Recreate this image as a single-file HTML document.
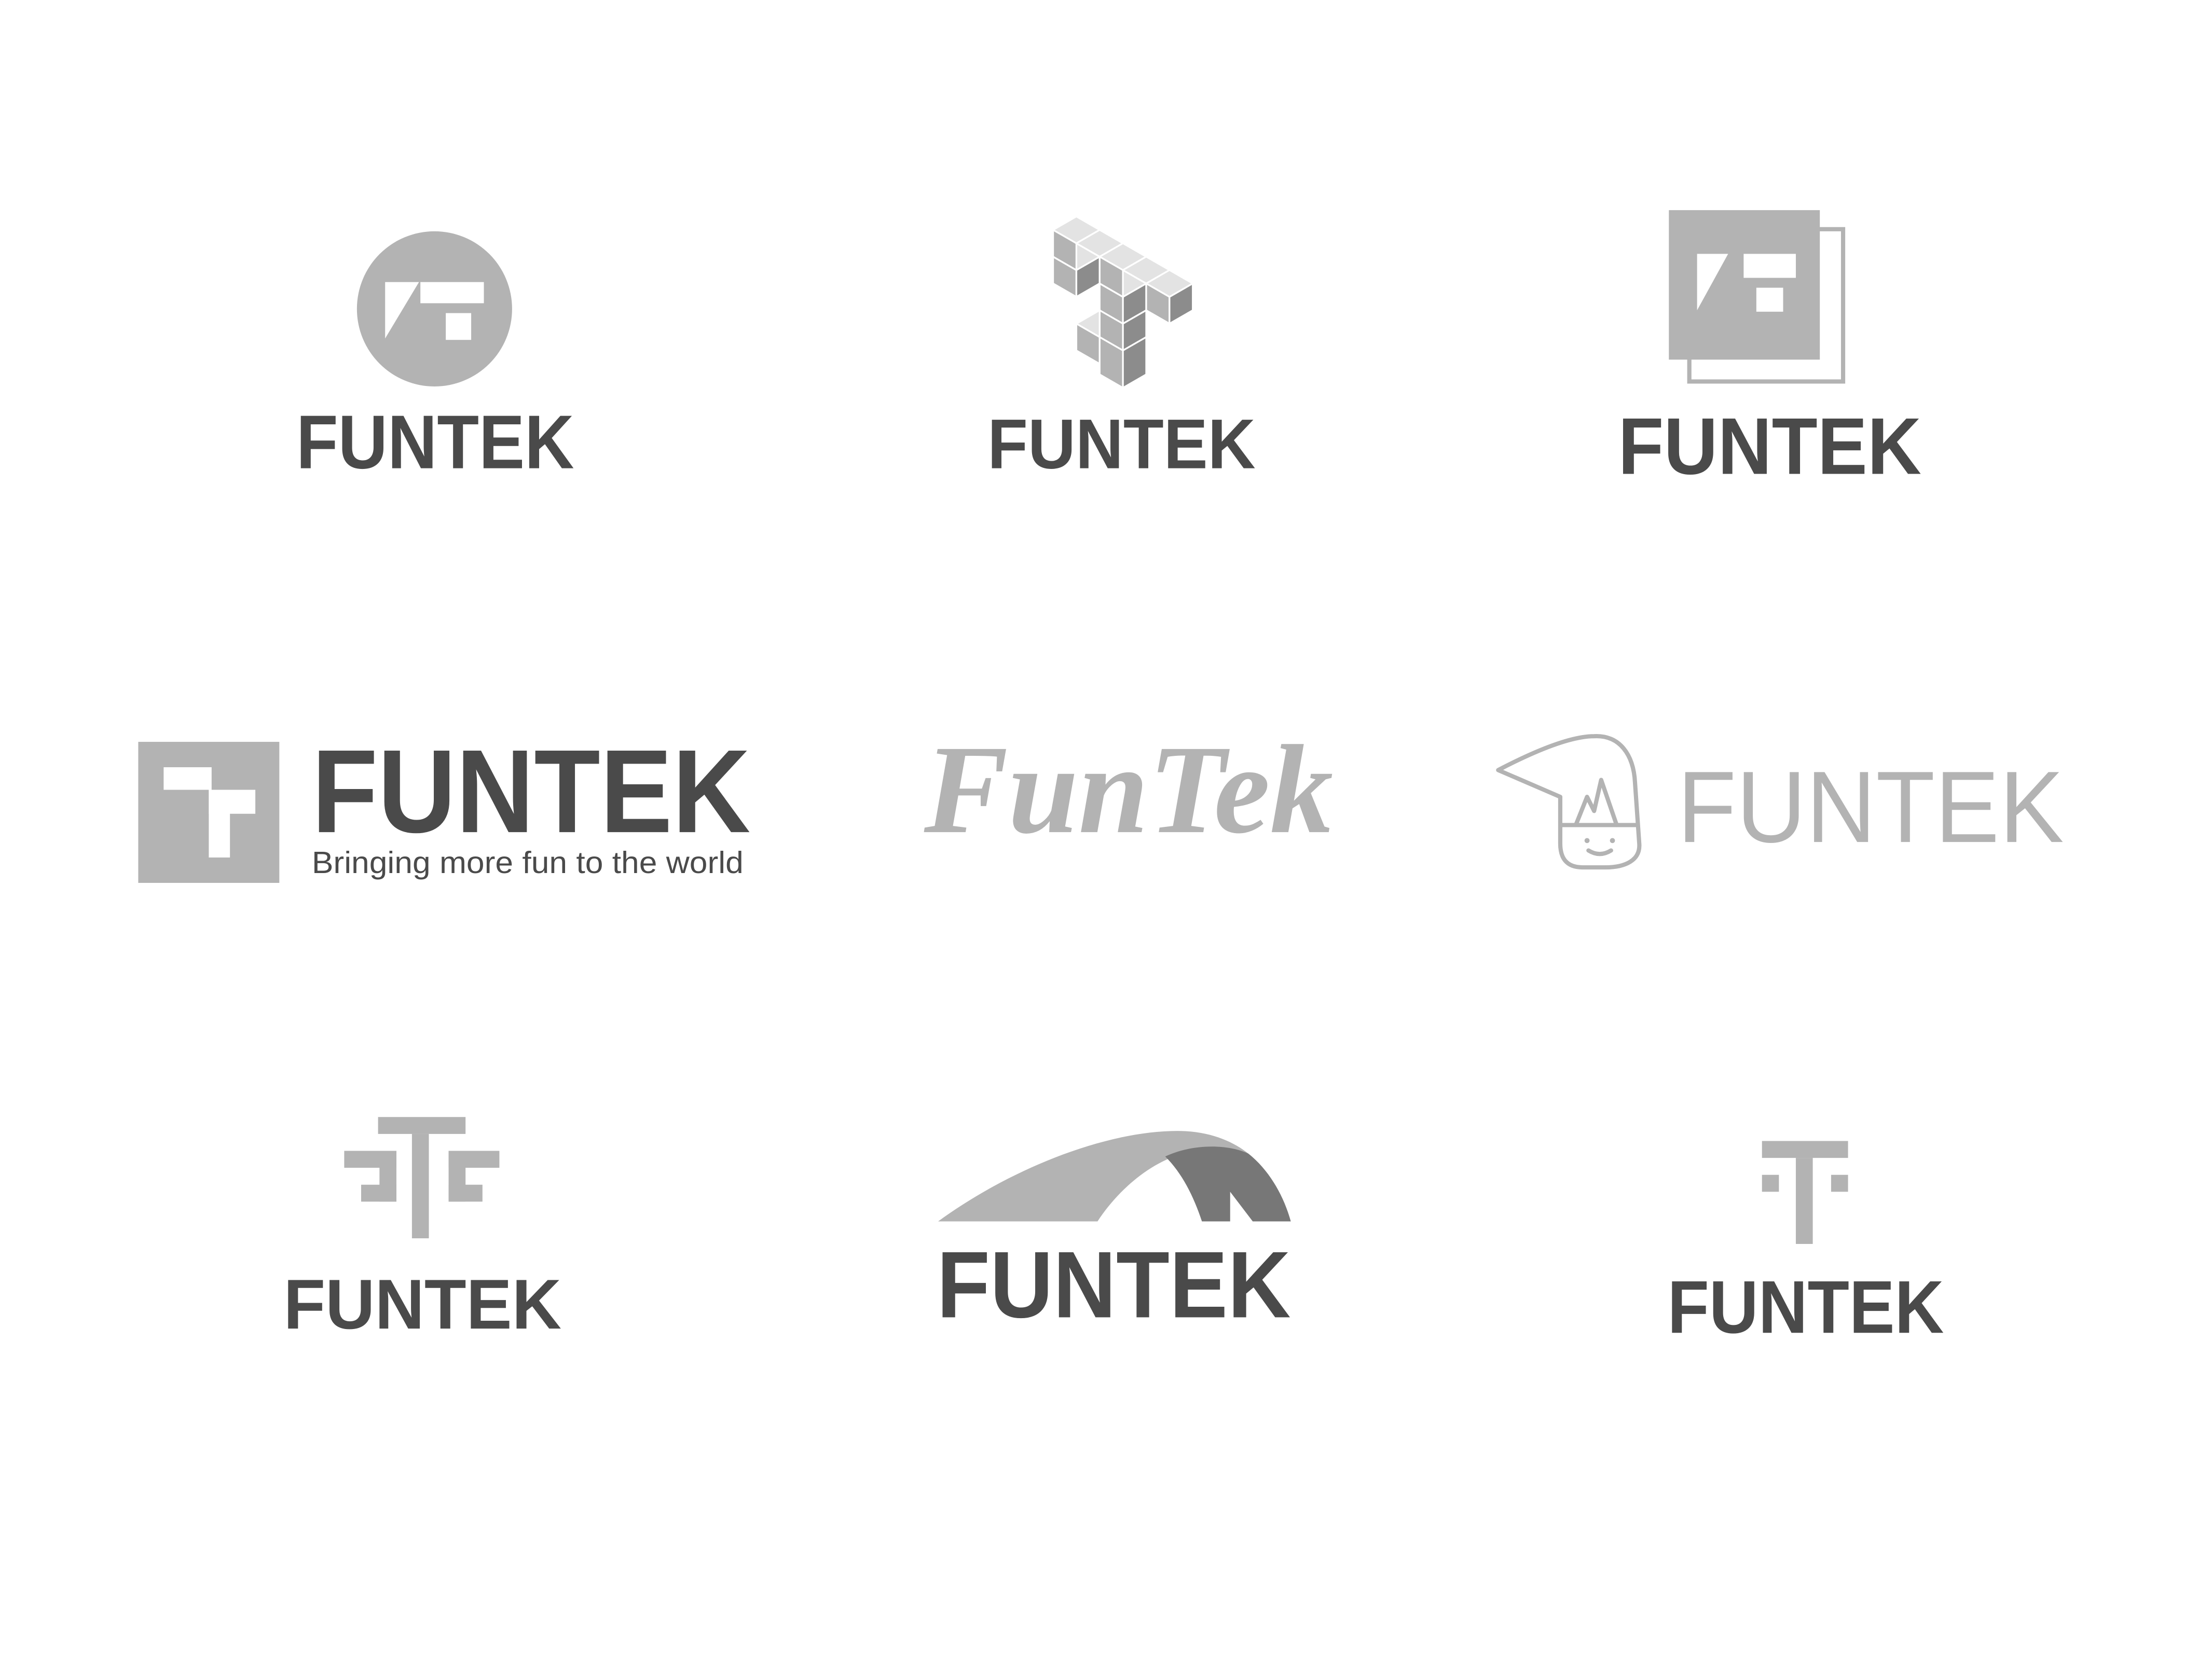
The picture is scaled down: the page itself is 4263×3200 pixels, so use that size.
<!DOCTYPE html>
<html><head><meta charset="utf-8"><style>
html,body{margin:0;padding:0;background:#fff;}
svg{display:block;}
text{font-family:"Liberation Sans",sans-serif;}
</style></head><body>
<svg width="4263" height="3200" viewBox="0 0 1568 1177" preserveAspectRatio="none" xmlns="http://www.w3.org/2000/svg">
<rect width="1568" height="1177" fill="#fff"/>
<!-- Logo 1 -->
<circle cx="308" cy="219" r="55" fill="#b3b3b3"/>
<polygon points="273,200 297,200 273,240" fill="#fff"/>
<rect x="298" y="200" width="45" height="15" fill="#fff"/>
<rect x="316" y="222" width="18" height="19" fill="#fff"/>
<text x="210" y="332" font-size="54" font-weight="bold" fill="#4a4a4a" textLength="197" lengthAdjust="spacingAndGlyphs">FUNTEK</text>

<!-- Logo 2: isometric cubes -->
<g stroke="#fff" stroke-width="1.2" stroke-linejoin="round">
<g id="cubes"></g>
</g>
<g stroke="#fff" stroke-width="1.2">
<!-- cube macro manual: top (#e3e3e3), left (#b3b3b3), right (#8c8c8c) w=16.5 h=9.5 s=19 -->
<!-- first cube lower -->
<polygon points="746.5,182 763,191.5 763,210.5 746.5,201" fill="#b3b3b3"/>
<polygon points="763,191.5 779.5,182 779.5,201 763,210.5" fill="#8c8c8c"/>
<polygon points="763,172.5 779.5,182 763,191.5 746.5,182" fill="#e3e3e3"/>
<!-- top bar -->
<polygon points="763,153.5 779.5,163 763,172.5 746.5,163" fill="#e3e3e3"/>
<polygon points="746.5,163 763,172.5 763,191.5 746.5,182" fill="#b3b3b3"/>
<polygon points="779.5,163 796,172.5 779.5,182 763,172.5" fill="#e3e3e3"/>
<polygon points="796,172.5 812.5,182 796,191.5 779.5,182" fill="#e3e3e3"/>
<!-- stem -->
<polygon points="779.5,201 796,210.5 796,229.5 779.5,220" fill="#b3b3b3"/>
<polygon points="779.5,220 796,229.5 796,248.5 779.5,239" fill="#b3b3b3"/>
<polygon points="796,210.5 812.5,201 812.5,220 796,229.5" fill="#8c8c8c"/>
<polygon points="796,229.5 812.5,220 812.5,239 796,248.5" fill="#8c8c8c"/>
<polygon points="796,191.5 812.5,201 796,210.5 779.5,201" fill="#e3e3e3"/>
<polygon points="779.5,182 796,191.5 796,210.5 779.5,201" fill="#b3b3b3"/>
<polygon points="812.5,182 829,191.5 812.5,201 796,191.5" fill="#e3e3e3"/>
<polygon points="829,191.5 845.5,201 829,210.5 812.5,201" fill="#e3e3e3"/>
<polygon points="812.5,201 829,210.5 829,229.5 812.5,220" fill="#b3b3b3"/>
<polygon points="829,210.5 845.5,201 845.5,220 829,229.5" fill="#8c8c8c"/>
<polygon points="779.5,220 763,229.5 779.5,239" fill="#e3e3e3"/>
<polygon points="763,229.5 779.5,239 779.5,258 763,248.5" fill="#b3b3b3"/>
<polygon points="779.5,239 796,248.5 796,275 779.5,265.5" fill="#b3b3b3"/>
<polygon points="796,248.5 812.5,239 812.5,265.5 796,275" fill="#8c8c8c"/>
</g>
<text x="700" y="332" font-size="50" font-weight="bold" fill="#4a4a4a" textLength="190" lengthAdjust="spacingAndGlyphs">FUNTEK</text>

<!-- Logo 3 -->
<rect x="1197.5" y="162.5" width="109" height="108" fill="none" stroke="#b3b3b3" stroke-width="3"/>
<rect x="1183" y="149" width="107" height="106" fill="#b3b3b3"/>
<polygon points="1203,180 1225,180 1203,220" fill="#fff"/>
<rect x="1236" y="180" width="37" height="17" fill="#fff"/>
<rect x="1245" y="204" width="19" height="17" fill="#fff"/>
<text x="1147" y="336" font-size="57" font-weight="bold" fill="#4a4a4a" textLength="215" lengthAdjust="spacingAndGlyphs">FUNTEK</text>

<!-- Logo 4 -->
<rect x="98" y="526" width="100" height="100" fill="#b3b3b3"/>
<rect x="116" y="544" width="34" height="16" fill="#fff"/>
<rect x="148" y="560" width="33" height="17" fill="#fff"/>
<rect x="148" y="560" width="15" height="48" fill="#fff"/>
<text x="221" y="590" font-size="84" font-weight="bold" fill="#4a4a4a" textLength="311" lengthAdjust="spacingAndGlyphs">FUNTEK</text>
<text x="221" y="619" font-size="22" fill="#4a4a4a" textLength="306" lengthAdjust="spacingAndGlyphs">Bringing more fun to the world</text>

<!-- Logo 5 script -->
<text x="655" y="590" font-family="Liberation Serif,serif" font-size="90" font-style="italic" font-weight="bold" fill="#b3b3b3" textLength="290" lengthAdjust="spacingAndGlyphs" style="font-family:'Liberation Serif',serif">FunTek</text>

<!-- Logo 6 wizard -->
<g fill="none" stroke="#b3b3b3" stroke-width="3" stroke-linejoin="round" stroke-linecap="round">
<path d="M1062,546 C1085,534 1112,522 1130,522 C1148,521 1158,535 1159,555 L1162,598 C1163,610 1152,615 1138,615 L1122,615 C1110,615 1106,608 1106,598 L1106,565 Z"/>
<path d="M1117,585 L1125,565 L1130,575 L1135,553 L1146,585"/>
<path d="M1106,585 L1160,585"/>
<path d="M1126,603 Q1134,608 1142,603"/>
</g>
<circle cx="1125" cy="596" r="1.8" fill="#b3b3b3"/>
<circle cx="1143" cy="596" r="1.8" fill="#b3b3b3"/>
<text x="1189" y="597" font-size="72" fill="#b3b3b3" textLength="274" lengthAdjust="spacingAndGlyphs">FUNTEK</text>

<!-- Logo 7 -->
<g fill="#b3b3b3">
<rect x="268" y="792" width="62" height="12"/>
<rect x="292" y="804" width="12" height="74"/>
<rect x="244" y="816" width="37" height="12"/>
<rect x="269" y="816" width="12" height="36"/>
<rect x="256" y="840" width="25" height="12"/>
<rect x="318" y="816" width="36" height="12"/>
<rect x="318" y="816" width="12" height="36"/>
<rect x="318" y="840" width="24" height="12"/>
</g>
<text x="201" y="942" font-size="50" font-weight="bold" fill="#4a4a4a" textLength="197" lengthAdjust="spacingAndGlyphs">FUNTEK</text>

<!-- Logo 8 arch -->
<path d="M665,866 C720,826 790,800 840,802 C860,803 875,810 885,818 L858,815 C825,815 795,840 778,866 Z" fill="#b3b3b3"/>
<path d="M826,820 C845,811 870,811 885,818 C900,830 910,848 915,866 L888,866 L872,845 L872,866 L852,866 C846,848 838,832 826,820 Z" fill="#777"/>
<text x="664" y="934" font-size="67" font-weight="bold" fill="#4a4a4a" textLength="251" lengthAdjust="spacingAndGlyphs">FUNTEK</text>

<!-- Logo 9 -->
<g fill="#b3b3b3">
<rect x="1249" y="809" width="61" height="12"/>
<rect x="1273" y="821" width="12" height="61"/>
<rect x="1249" y="833" width="12" height="12"/>
<rect x="1298" y="833" width="12" height="12"/>
</g>
<text x="1182" y="945" font-size="53" font-weight="bold" fill="#4a4a4a" textLength="196" lengthAdjust="spacingAndGlyphs">FUNTEK</text>
</svg>
</body></html>
